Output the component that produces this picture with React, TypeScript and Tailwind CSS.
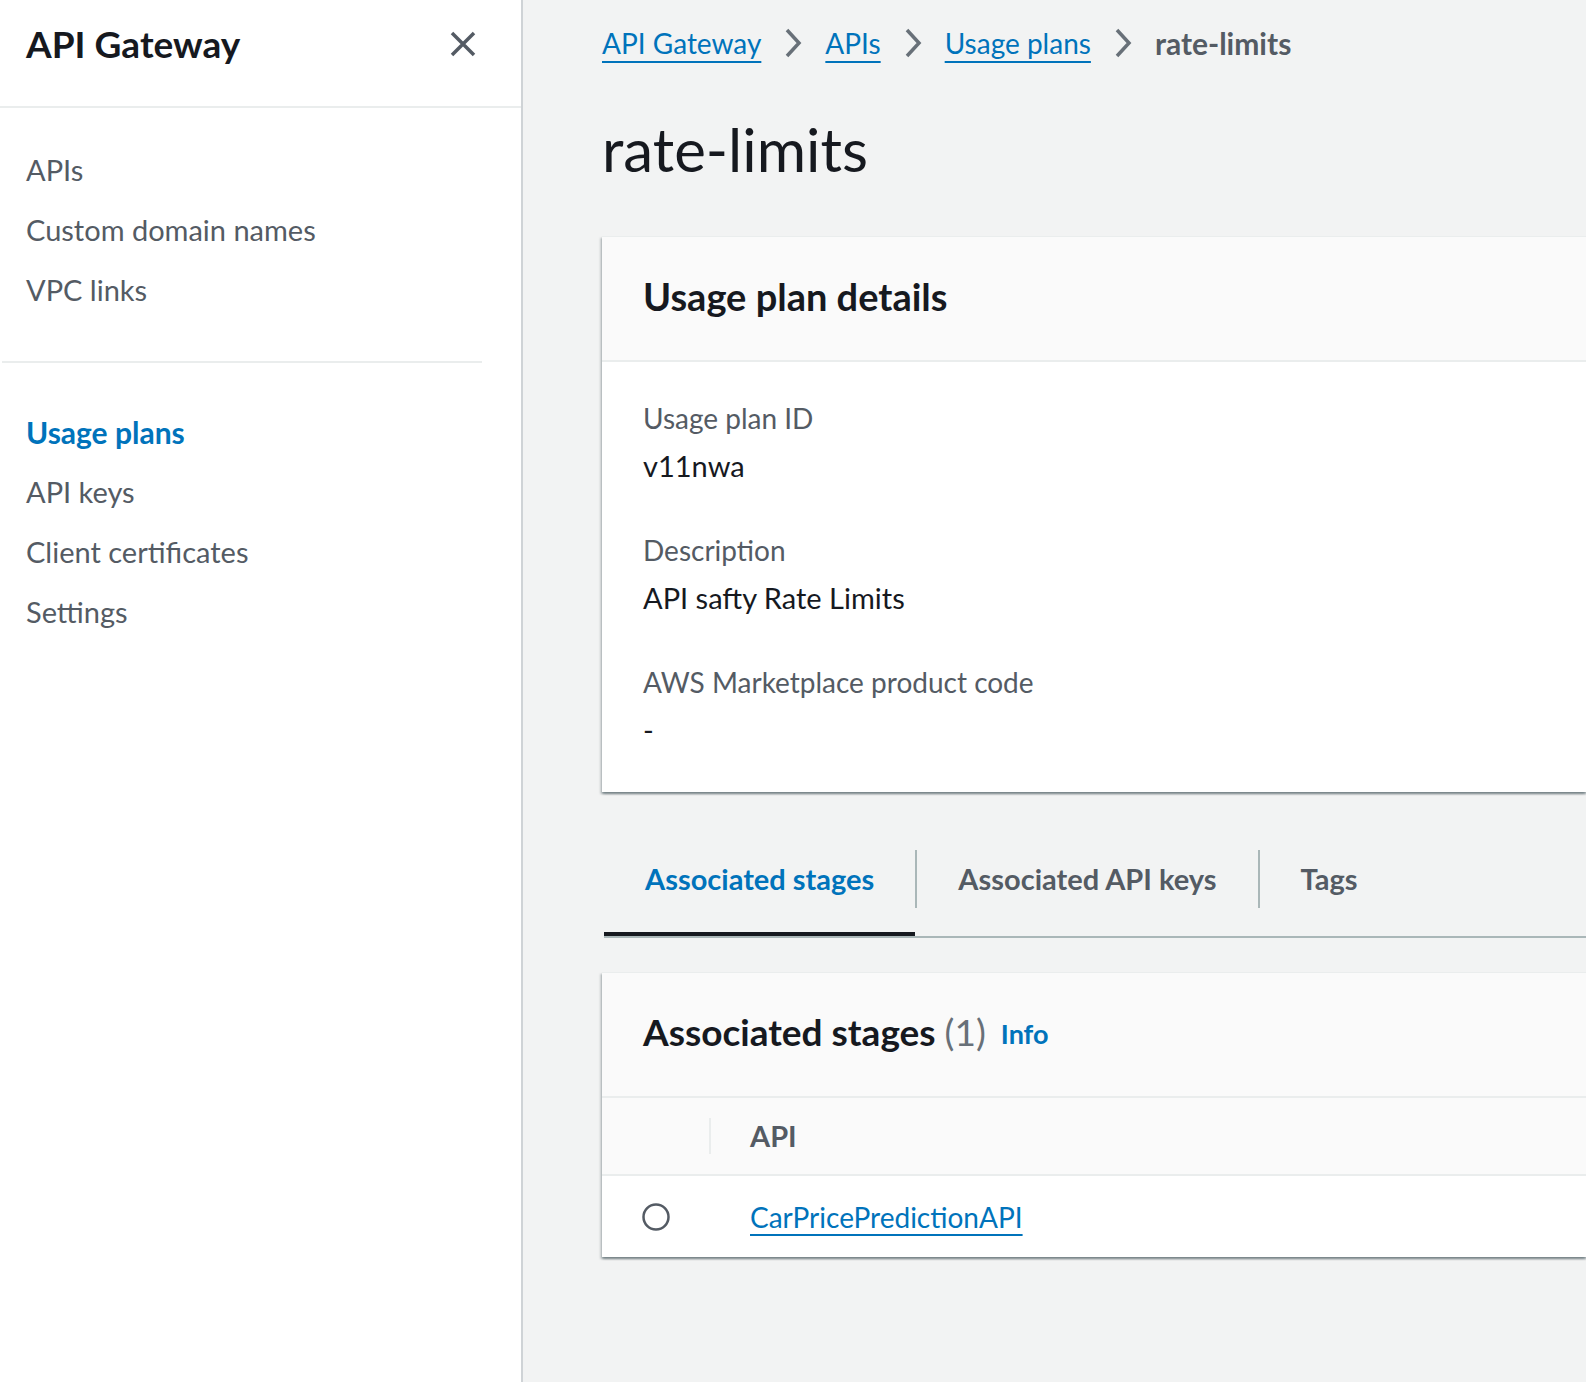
import React from 'react';

const navTop = ['APIs', 'Custom domain names', 'VPC links'];
const navBottom = ['Usage plans', 'API keys', 'Client certificates', 'Settings'];

const crumbs = ['API Gateway', 'APIs', 'Usage plans'];

const details = [
  { label: 'Usage plan ID', value: 'v11nwa' },
  { label: 'Description', value: 'API safty Rate Limits' },
  { label: 'AWS Marketplace product code', value: '-' },
];

const tabs = ['Associated stages', 'Associated API keys', 'Tags'];

const cardShadow =
  'shadow-[0_2px_2px_0_rgba(0,28,36,0.35),2px_2px_2px_0_rgba(0,28,36,0.12),-2px_2px_2px_0_rgba(0,28,36,0.15)]';

const Chevron = () => (
  <svg width="20" height="30" viewBox="0 0 20 30" fill="none" className="shrink-0">
    <path d="M4 2 L16 15 L4 28" stroke="#687078" strokeWidth="3.5" />
  </svg>
);

const CloseIcon = () => (
  <svg width="26" height="26" viewBox="0 0 26 26" fill="none">
    <path d="M2 2 L24 24 M24 2 L2 24" stroke="#545b64" strokeWidth="3.5" />
  </svg>
);

const Radio = () => (
  <svg width="28" height="28" viewBox="0 0 28 28" fill="none">
    <circle cx="14" cy="14" r="12.5" stroke="#545b64" strokeWidth="2.5" fill="#ffffff" />
  </svg>
);

export default function App() {
  return (
    <div className="flex min-h-screen w-full overflow-hidden font-['Lato',sans-serif] text-[#16191f]">
      {/* Sidebar */}
      <aside className="w-[523px] shrink-0 bg-white border-r-2 border-[#cfd3d6]">
        <div className="h-[108px] border-b-2 border-[#eaeded] pt-[22px] pl-[26px] pr-[45px]">
          <div className="flex items-center justify-between h-[44px]">
            <h2 className="text-[37px] leading-[44px] font-bold text-[#16191f]">API Gateway</h2>
            <CloseIcon />
          </div>
        </div>
        <nav className="pt-[32px]">
          <ul>
            {navTop.map((item) => (
              <li key={item} className="px-[26px] h-[60px] text-[29px] leading-[60px] text-[#545b64]">
                {item}
              </li>
            ))}
          </ul>
          <div className="mt-[41px] ml-[2px] mr-[39px] h-[2px] bg-[#eaeded]" />
          <ul className="mt-[39px]">
            {navBottom.map((item, i) => (
              <li
                key={item}
                className={`px-[26px] h-[60px] leading-[60px] ${
                  i === 0 ? 'text-[30px] font-bold text-[#0073bb]' : 'text-[29px] text-[#545b64]'
                }`}
              >
                {item}
              </li>
            ))}
          </ul>
        </nav>
      </aside>

      {/* Main content */}
      <main className="flex-1 min-w-0 bg-[#f2f3f3] pl-[79px] pt-[23px] pb-[60px]">
        {/* Breadcrumbs */}
        <div className="flex items-center gap-[22px] h-[40px] text-[28px] leading-[40px]">
          {crumbs.map((c) => (
            <React.Fragment key={c}>
              <a className="text-[#0073bb] underline decoration-2 underline-offset-[7px]">{c}</a>
              <Chevron />
            </React.Fragment>
          ))}
          <span className="text-[30px] font-bold text-[#545b64]">rate-limits</span>
        </div>

        <h1 className="mt-[50px] text-[60px] leading-[72px] font-normal text-[#16191f]">rate-limits</h1>

        {/* Usage plan details */}
        <section className={`mt-[51px] bg-white ${cardShadow}`}>
          <div className="h-[126px] flex items-center px-[41px] pb-[6px] bg-[#fafafa] border-b-2 border-[#eaeded] border-t border-t-[#eaeded]">
            <h2 className="text-[38px] leading-[44px] font-bold">Usage plan details</h2>
          </div>
          <div className="px-[41px] pt-[34px] pb-[40px] flex flex-col gap-[40px]">
            {details.map((d) => (
              <div key={d.label} className="flex flex-col gap-[4px]">
                <div className="text-[28px] leading-[44px] text-[#545b64]">{d.label}</div>
                <div className="text-[29px] leading-[44px] text-[#16191f]">{d.value}</div>
              </div>
            ))}
          </div>
        </section>

        {/* Tabs */}
        <div className="mt-[34px] ml-[2px] flex border-b-2 border-[#aab7b8]">
          {tabs.map((t, i) => (
            <React.Fragment key={t}>
              {i > 0 && <div className="w-[2px] h-[58px] mt-[24px] bg-[#aab7b8]" />}
              <div className="flex flex-col">
                <div
                  className={`h-[106px] flex items-center px-[41px] text-[29px] font-bold ${
                    i === 0 ? 'text-[#0073bb]' : 'text-[#545b64]'
                  }`}
                >
                  {t}
                </div>
                <div className={`h-[4px] ${i === 0 ? 'bg-[#16191f]' : 'bg-transparent'}`} />
              </div>
            </React.Fragment>
          ))}
        </div>

        {/* Associated stages */}
        <section className={`mt-[34px] bg-white ${cardShadow}`}>
          <div className="h-[126px] flex items-center px-[41px] pb-[6px] bg-[#fafafa] border-b-2 border-[#eaeded] border-t border-t-[#eaeded]">
            <h2 className="text-[37px] leading-[44px] font-bold">
              Associated stages <span className="font-normal text-[#687078]">(1)</span>
            </h2>
            <a className="ml-[15px] mt-[6px] text-[27px] font-bold text-[#0073bb]">Info</a>
          </div>
          <div className="h-[78px] flex items-center bg-[#fafafa] border-b-2 border-[#eaeded]">
            <div className="w-[107px]" />
            <div className="w-[2px] h-[36px] bg-[#eaeded]" />
            <div className="pl-[39px] text-[29px] font-bold text-[#545b64]">API</div>
          </div>
          <div className="h-[81px] flex items-center">
            <div className="w-[107px] flex justify-center">
              <Radio />
            </div>
            <div className="w-[2px]" />
            <a className="pl-[39px] text-[28px] text-[#0073bb] underline decoration-2 underline-offset-[6px]">
              CarPricePredictionAPI
            </a>
          </div>
        </section>
      </main>
    </div>
  );
}
